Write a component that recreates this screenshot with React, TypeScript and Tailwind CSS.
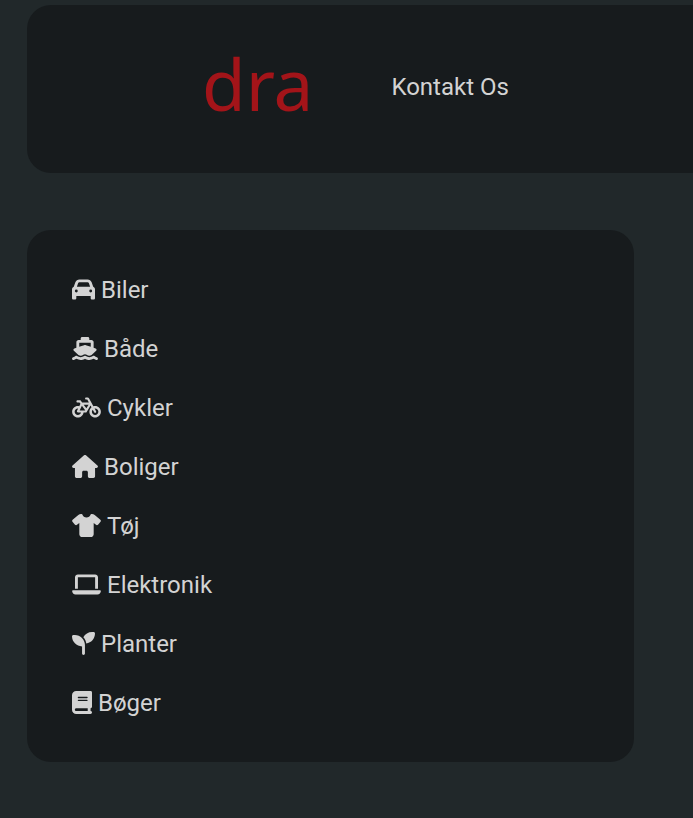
import {
  FaBicycle,
  FaBook,
  FaCar,
  FaHouse,
  FaLaptop,
  FaSeedling,
  FaShip,
  FaShirt,
} from 'react-icons/fa6';

const categories = [
  { label: 'Biler', Icon: FaCar, width: 'w-[23px]' },
  { label: 'Både', Icon: FaShip, width: 'w-[26px]' },
  { label: 'Cykler', Icon: FaBicycle, width: 'w-[29px]' },
  { label: 'Boliger', Icon: FaHouse, width: 'w-[26px]' },
  { label: 'Tøj', Icon: FaShirt, width: 'w-[29px]' },
  { label: 'Elektronik', Icon: FaLaptop, width: 'w-[29px]' },
  { label: 'Planter', Icon: FaSeedling, width: 'w-[23px]' },
  { label: 'Bøger', Icon: FaBook, width: 'w-[20px]' },
];

export default function App() {
  return (
    <div className="min-h-screen overflow-x-hidden bg-[#21282a] pt-[5px] pl-[27px] font-['Roboto',sans-serif] text-[24px] leading-[27px] font-normal text-[#d3d3d3]">
      <header className="flex h-[168px] items-center gap-[78px] rounded-l-3xl bg-[#171b1d] pb-1 pl-[175px]">
        <a href="#" className="pb-2 font-['Noto_Sans',sans-serif] text-[71px] leading-none text-[#a31419]">
          dra
        </a>
        <nav>
          <a href="#">Kontakt Os</a>
        </nav>
      </header>
      <aside className="mt-[57px] mr-[59px] rounded-3xl bg-[#171b1d] px-[45px] pt-[47px] pb-[45px]">
        <ul className="flex flex-col gap-8">
          {categories.map(({ label, Icon, width }) => (
            <li key={label}>
              <a href="#" className="flex items-center gap-[6px]">
                <Icon className={`mb-0.5 h-[23px] shrink-0 ${width}`} />
                <span>{label}</span>
              </a>
            </li>
          ))}
        </ul>
      </aside>
    </div>
  );
}
